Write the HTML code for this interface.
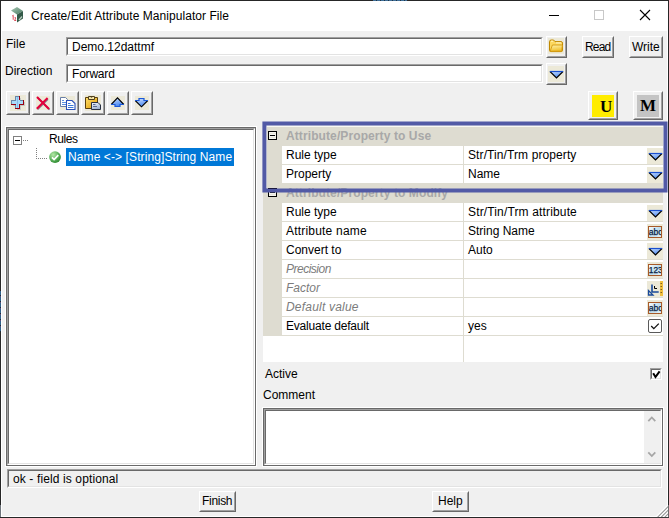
<!DOCTYPE html>
<html><head><meta charset="utf-8">
<style>
*{margin:0;padding:0;box-sizing:border-box}
html,body{width:669px;height:518px;overflow:hidden;background:#f0f0f0}
body{position:relative;font-family:"Liberation Sans",sans-serif;font-size:12px;color:#000}
.a{position:absolute}
.t{position:absolute;white-space:nowrap;line-height:14px;font-size:12px}
.btn{position:absolute;background:#f0f0f0;border:1px solid;border-color:#fff #696969 #696969 #fff}
.btn::before{content:"";position:absolute;left:0;top:0;right:0;bottom:0;border:1px solid;border-color:#f0f0f0 #a0a0a0 #a0a0a0 #f0f0f0}
.sunk{position:absolute;background:#fff;border:1px solid;border-color:#a0a0a0 #fff #fff #a0a0a0}
.sunk::before{content:"";position:absolute;left:0;top:0;right:0;bottom:0;border:1px solid;border-color:#696969 #e3e3e3 #e3e3e3 #696969}
.frame{position:absolute;background:#fff;border:1px solid #696969;box-shadow:0 0 0 1px #fff}
.frame::before{content:"";position:absolute;left:0;top:0;right:0;bottom:0;border:1px solid;border-color:#a0a0a0 #fff #fff #a0a0a0}
.frame::after{content:"";position:absolute;left:1px;top:1px;right:1px;bottom:1px;border:1px solid;border-color:#696969 #e3e3e3 #e3e3e3 #696969}
.ib{position:absolute;background:#ece9d8}
.gl{position:absolute;background:#dedcd1}
</style></head><body>
<!-- window border -->
<div class="a" style="left:0;top:0;width:669px;height:518px;border:1px solid #262626;background:#fff"></div>
<div class="a" style="left:2px;top:31px;width:665px;height:485px;background:#f0f0f0"></div>

<div class="a" style="left:373px;top:0;width:34px;height:1px;background:repeating-linear-gradient(90deg,#3f6f98 0 3px,#1e3448 3px 4px)"></div>
<div class="a" style="left:0;top:291px;width:1px;height:41px;background:repeating-linear-gradient(180deg,#2f6088 0 4px,#1a2a3a 4px 5px,#5a4a7a 5px 6px)"></div>
<div class="a" style="left:0;top:505px;width:1px;height:12px;background:#6e757c"></div>
<!-- title bar -->
<svg class="a" style="left:10px;top:6px" width="16" height="18" viewBox="0 0 16 18">
  <defs><linearGradient id="gt" x1="0" y1="0" x2="1" y2="1"><stop offset="0" stop-color="#a8c8b4"/><stop offset="1" stop-color="#4a7a62"/></linearGradient></defs>
  <path d="M1 4.5 L7 1 L13 5 L7 8.5 Z" fill="url(#gt)"/>
  <path d="M7 8.5 L13 5 L13 12.5 L7 16.5 Z" fill="#335a48"/>
  <path d="M9 14 L12 10.5" stroke="#b8ccc0" stroke-width="1.3"/>
  <path d="M2.3 10 L3.2 9.2 V13.8 M4.5 11.8 Q6 10.8 5.5 12.8 L4.5 14.5 H6.2" stroke="#d83848" stroke-width="0.9" fill="none"/>
</svg>
<div class="t" style="left:31px;top:9px;letter-spacing:0.05px">Create/Edit Attribute Manipulator File</div>
<div class="a" style="left:549px;top:15px;width:10px;height:1px;background:#000"></div>
<div class="a" style="left:594px;top:10px;width:10px;height:10px;border:1px solid #c8c8c8"></div>
<svg class="a" style="left:639px;top:9px" width="12" height="12" viewBox="0 0 12 12"><path d="M1 1 L11 11 M11 1 L1 11" stroke="#000" stroke-width="1.1"/></svg>

<!-- File / Direction -->
<div class="t" style="left:6px;top:37px">File</div>
<div class="t" style="left:5px;top:64px">Direction</div>
<div class="sunk" style="left:66px;top:37px;width:477px;height:19px"></div>
<div class="t" style="left:72px;top:40px">Demo.12dattmf</div>
<div class="sunk" style="left:66px;top:64px;width:477px;height:19px"></div>
<div class="t" style="left:72px;top:67px;letter-spacing:-0.2px">Forward</div>

<div class="btn" style="left:546px;top:36px;width:21px;height:22px"></div>
<div class="ib" style="left:548px;top:38px;width:16px;height:16px"></div>
<svg class="a" style="left:548px;top:38px" width="16" height="16" viewBox="0 0 16 16">
  <defs><linearGradient id="gf" x1="0" y1="0" x2="0.3" y2="1"><stop offset="0" stop-color="#fff4b0"/><stop offset="1" stop-color="#f0c030"/></linearGradient>
  <linearGradient id="ga" x1="0" y1="0" x2="0.4" y2="1"><stop offset="0" stop-color="#d8e8ff"/><stop offset="1" stop-color="#4a88f0"/></linearGradient></defs>
  <path d="M1.5 3.8 Q1.5 2 3.2 2 H5.6 L7 3.6 H13 Q14.5 3.6 14.5 5.1 V12.3 Q14.5 13.6 13.3 13.6 H2.7 Q1.5 13.6 1.5 12.3 Z" fill="#fcd860" stroke="#c08800" stroke-width="1"/>
  <path d="M3 3.2 H5.2 M8 4.9 H13.2" stroke="#fff6c8" stroke-width="1"/>
  <path d="M4.4 7 H14.4 L13.7 13.2 H2.2 Z" fill="url(#gf)" stroke="#d49a10" stroke-width="0.9"/>
</svg>
<div class="btn" style="left:546px;top:63px;width:21px;height:22px"></div>
<div class="ib" style="left:548px;top:66px;width:16px;height:16px"></div>
<svg class="a" style="left:548px;top:65px" width="16" height="16" viewBox="0 0 16 16">
  <path d="M1.8 6 H15.2 L8.5 13 Z" fill="url(#ga)"/>
  <path d="M2 6.5 L8.5 13 L15 6.5" stroke="#000" stroke-width="1.15" fill="none"/>
  <path d="M1.8 6.5 H15.2" stroke="#1a50d0" stroke-width="1.2"/>
</svg>
<div class="btn" style="left:582px;top:36px;width:32px;height:22px"></div>
<div class="t" style="left:585px;top:40px;letter-spacing:-0.8px">Read</div>
<div class="btn" style="left:629px;top:36px;width:34px;height:22px"></div>
<div class="t" style="left:632px;top:40px">Write</div>

<!-- toolbar -->
<div class="btn" style="left:6px;top:91px;width:24px;height:24px"></div>
<div class="ib" style="left:10px;top:95px;width:16px;height:16px"></div>
<svg class="a" style="left:10px;top:95px" width="16" height="16" viewBox="0 0 16 16" shape-rendering="crispEdges">
  <path d="M6 2 H10 V6 H14 V10 H10 V14 H6 V10 H2 V6 H6 Z" fill="#b8e6ff" transform="translate(0.6,0.6)" opacity="0.35" style="fill:#8090a8"/>
  <path d="M5 1 H10 V5 H14 V10 H10 V14 H5 V10 H1 V5 H5 Z" fill="#a8dcfa"/>
  <path d="M7 2 H8 V13 H7 Z" fill="#88b8e8"/>
  <path d="M5 1 H10 V2 H6 V6 H2 V9 H1 V5 H5 Z M10 5 H14 V6 H10 Z" fill="#6a88a8"/>
  <path d="M9 1 H10 V5 H9 Z M13 5 H14 V10 H13 Z M10 9 H14 V10 H10 Z M9 9 H10 V14 H9 Z M5 13 H10 V14 H5 Z M1 9 H6 V10 H1 Z M5 10 H6 V14 H5 Z" fill="#9a0010"/>
  <path d="M5 10 H6 V13 H5 Z" fill="#6a88a8"/>
</svg>
<div class="btn" style="left:32px;top:91px;width:22px;height:24px"></div>
<div class="ib" style="left:36px;top:96px;width:14px;height:14px"></div>
<svg class="a" style="left:35px;top:95px" width="16" height="16" viewBox="0 0 16 16">
  <path d="M2.8 2.8 L14.6 14.6 M13 4.2 L2.6 14.4" stroke="#5a6070" stroke-width="1.6" opacity="0.7"/>
  <path d="M2 2 L14 14 M12.6 3 L1.8 13.8" stroke="#e4003a" stroke-width="2"/>
</svg>
<div class="btn" style="left:56px;top:91px;width:23px;height:24px"></div>
<div class="ib" style="left:60px;top:96px;width:15px;height:14px"></div>
<svg class="a" style="left:60px;top:95px" width="16" height="16" viewBox="0 0 16 16">
  <path d="M0.5 2.5 H5.5 L7.5 4.5 V11.5 H0.5 Z" fill="#fff" stroke="#6a80a8" stroke-width="1"/>
  <path d="M2 5.5 H4 M2 7.5 H6 M2 9.5 H6" stroke="#5a90e0" stroke-width="1"/>
  <path d="M6.5 5.5 H12 L15 8.5 V14.5 H6.5 Z" fill="#fff" stroke="#2a50b8" stroke-width="1.1"/>
  <path d="M8 8.5 H10.5 M8 10.5 H13.5 M8 12.5 H13.5" stroke="#3a78d8" stroke-width="1"/>
</svg>
<div class="btn" style="left:81px;top:91px;width:24px;height:24px"></div>
<div class="ib" style="left:85px;top:95px;width:16px;height:16px"></div>
<svg class="a" style="left:85px;top:95px" width="16" height="16" viewBox="0 0 16 16">
  <defs><linearGradient id="gp" x1="0" y1="0" x2="1" y2="1"><stop offset="0" stop-color="#ffe070"/><stop offset="1" stop-color="#e09a00"/></linearGradient>
  <linearGradient id="gd" x1="0" y1="0" x2="0.5" y2="1"><stop offset="0" stop-color="#f4f8ff"/><stop offset="1" stop-color="#a0b4d0"/></linearGradient></defs>
  <path d="M0.5 2.5 H12.5 V13.5 H0.5 Z" fill="url(#gp)" stroke="#5a4010" stroke-width="1"/>
  <path d="M3.5 1.5 H9.5 V4.5 H3.5 Z" fill="#f8e8a8" stroke="#504020" stroke-width="1"/>
  <circle cx="6.5" cy="2" r="0.8" fill="#504020"/>
  <path d="M6.5 7.5 H13 L15.5 10 V14.5 H6.5 Z" fill="url(#gd)" stroke="#283040" stroke-width="1"/>
  <path d="M8 9.5 H10.5 M8 11.5 H12" stroke="#5a6a90" stroke-width="1"/>
</svg>
<div class="btn" style="left:107px;top:91px;width:22px;height:24px"></div>
<div class="ib" style="left:111px;top:96px;width:14px;height:14px"></div>
<svg class="a" style="left:110px;top:95px" width="16" height="16" viewBox="0 0 16 16">
  <path d="M7.5 2.5 L14 9.5 H10 V11.5 H5 V9.5 H1 Z" fill="url(#ga)"/>
  <path d="M1.2 9.5 L7.5 2.8 L13.8 9.5" stroke="#000" stroke-width="1.1" fill="none"/>
  <path d="M1 9.5 H5 V11.5 H10 V9.5 H14" stroke="#1a58d8" stroke-width="1.2" fill="none"/>
</svg>
<div class="btn" style="left:131px;top:91px;width:22px;height:24px"></div>
<div class="ib" style="left:135px;top:96px;width:14px;height:14px"></div>
<svg class="a" style="left:134px;top:95px" width="16" height="16" viewBox="0 0 16 16">
  <path d="M5 3.5 H10 V5.5 H14 L7.5 12 L1 5.5 H5 Z" fill="url(#ga)"/>
  <path d="M1.2 5.5 L7.5 11.8 L13.8 5.5" stroke="#000" stroke-width="1.1" fill="none"/>
  <path d="M1 5.5 H5 V3.5 H10 V5.5 H14" stroke="#1a58d8" stroke-width="1.2" fill="none"/>
</svg>

<!-- U / M -->
<div class="btn" style="left:588px;top:91px;width:30px;height:29px"></div>
<div class="a" style="left:592px;top:95px;width:22px;height:22px;background:#ffec00"></div>
<div class="t" style="left:600px;top:98px;font-family:'Liberation Serif';font-weight:bold;font-size:17px;line-height:18px">U</div>
<div class="btn" style="left:633px;top:91px;width:30px;height:29px"></div>
<div class="a" style="left:637px;top:95px;width:22px;height:22px;background:#c4c4c4"></div>
<div class="t" style="left:640px;top:97px;font-family:'Liberation Serif';font-weight:bold;font-size:17px;line-height:18px">M</div>

<!-- tree panel -->
<div class="frame" style="left:6px;top:127px;width:250px;height:339px"></div>
<div class="a" style="left:13px;top:136px;width:9px;height:9px;border:1px solid #808080;background:#fff"></div>
<div class="a" style="left:15px;top:140px;width:5px;height:1px;background:#000"></div>
<div class="a" style="left:23px;top:140px;width:5px;height:1px;background:repeating-linear-gradient(90deg,#808080 0 1px,transparent 1px 2px)"></div>
<div class="t" style="left:49px;top:132px;letter-spacing:-0.4px">Rules</div>
<div class="a" style="left:36px;top:148px;width:1px;height:11px;background:repeating-linear-gradient(180deg,#808080 0 1px,transparent 1px 2px)"></div>
<div class="a" style="left:36px;top:158px;width:11px;height:1px;background:repeating-linear-gradient(90deg,#808080 0 1px,transparent 1px 2px)"></div>
<svg class="a" style="left:48px;top:150px" width="14" height="14" viewBox="0 0 14 14">
  <defs><radialGradient id="gg" cx="0.35" cy="0.3" r="0.75"><stop offset="0" stop-color="#b4e8a8"/><stop offset="0.6" stop-color="#5ab05a"/><stop offset="1" stop-color="#2e8a30"/></radialGradient></defs>
  <circle cx="7" cy="7.1" r="5.9" fill="url(#gg)"/>
  <path d="M4 7.4 L6.1 9.5 L10.3 5.2" stroke="#fff" stroke-width="1.7" fill="none"/>
</svg>
<div class="a" style="left:66px;top:148px;width:168px;height:18px;background:#0078d7"></div>
<div class="t" style="left:68px;top:150px;color:#fff;letter-spacing:0.1px">Name &lt;-&gt; [String]String Name</div>

<!-- property grid -->
<div class="a" style="left:263px;top:127px;width:400px;height:235px;background:#fff"></div>
<div class="gl" style="left:263px;top:127px;width:400px;height:19px"></div>
<div class="gl" style="left:263px;top:127px;width:19px;height:208px"></div>
<div class="gl" style="left:263px;top:184px;width:400px;height:19px"></div>
<!-- row separators -->
<div class="gl" style="left:282px;top:164px;width:381px;height:1px"></div>
<div class="gl" style="left:282px;top:183px;width:381px;height:1px"></div>
<div class="gl" style="left:282px;top:221px;width:381px;height:1px"></div>
<div class="gl" style="left:282px;top:240px;width:381px;height:1px"></div>
<div class="gl" style="left:282px;top:259px;width:381px;height:1px"></div>
<div class="gl" style="left:282px;top:278px;width:381px;height:1px"></div>
<div class="gl" style="left:282px;top:297px;width:381px;height:1px"></div>
<div class="gl" style="left:282px;top:316px;width:381px;height:1px"></div>
<div class="gl" style="left:263px;top:335px;width:400px;height:1px"></div>
<!-- column divider -->
<div class="gl" style="left:463px;top:146px;width:1px;height:38px"></div>
<div class="gl" style="left:463px;top:203px;width:1px;height:159px"></div>
<!-- button cells -->
<div class="ib" style="left:647px;top:148px;width:16px;height:16px"></div>
<div class="ib" style="left:647px;top:167px;width:16px;height:16px"></div>
<div class="ib" style="left:647px;top:205px;width:16px;height:16px"></div>
<div class="ib" style="left:647px;top:224px;width:16px;height:16px"></div>
<div class="ib" style="left:647px;top:243px;width:16px;height:16px"></div>
<div class="ib" style="left:647px;top:262px;width:16px;height:16px"></div>
<div class="ib" style="left:647px;top:281px;width:16px;height:16px"></div>
<div class="ib" style="left:647px;top:300px;width:16px;height:16px"></div>

<!-- category 1 -->
<div class="a" style="left:268px;top:131px;width:9px;height:9px;border:1px solid #000;background:repeating-linear-gradient(180deg,#f6f5ee 0 1px,#e8e7dc 1px 2px)"></div>
<div class="a" style="left:270px;top:135px;width:5px;height:1px;background:#000"></div>
<div class="t" style="left:286px;top:129px;font-weight:bold;color:#a8a8a8;letter-spacing:0.1px">Attribute/Property to Use</div>
<div class="t" style="left:286px;top:148px">Rule type</div>
<div class="t" style="left:468px;top:148px;letter-spacing:0.1px">Str/Tin/Trm property</div>
<div class="t" style="left:286px;top:167px">Property</div>
<div class="t" style="left:468px;top:167px">Name</div>
<!-- category 2 -->
<div class="a" style="left:268px;top:188px;width:9px;height:9px;border:1px solid #000;background:repeating-linear-gradient(180deg,#f6f5ee 0 1px,#e8e7dc 1px 2px)"></div>
<div class="a" style="left:270px;top:192px;width:5px;height:1px;background:#000"></div>
<div class="t" style="left:286px;top:186px;font-weight:bold;color:#a8a8a8;letter-spacing:0.1px">Attribute/Property to Modify</div>
<div class="t" style="left:286px;top:205px">Rule type</div>
<div class="t" style="left:468px;top:205px;letter-spacing:0.15px">Str/Tin/Trm attribute</div>
<div class="t" style="left:286px;top:224px;letter-spacing:0.2px">Attribute name</div>
<div class="t" style="left:468px;top:224px">String Name</div>
<div class="t" style="left:286px;top:243px">Convert to</div>
<div class="t" style="left:468px;top:243px">Auto</div>
<div class="t" style="left:286px;top:262px;font-style:italic;color:#7c7c7c;letter-spacing:-0.5px">Precision</div>
<div class="t" style="left:286px;top:281px;font-style:italic;color:#7c7c7c">Factor</div>
<div class="t" style="left:286px;top:300px;font-style:italic;color:#7c7c7c;letter-spacing:0.2px">Default value</div>
<div class="t" style="left:286px;top:319px;letter-spacing:-0.2px">Evaluate default</div>
<div class="t" style="left:468px;top:319px">yes</div>

<!-- dropdown arrows -->
<svg class="a" style="left:647px;top:148px" width="16" height="16" viewBox="0 0 16 16"><path d="M1.8 5 H15.2 L8.5 12 Z" fill="url(#ga)"/><path d="M2 5.5 L8.5 12 L15 5.5" stroke="#000" stroke-width="1.15" fill="none"/><path d="M1.8 5.5 H15.2" stroke="#1a50d0" stroke-width="1.2"/></svg>
<svg class="a" style="left:647px;top:167px" width="16" height="16" viewBox="0 0 16 16"><path d="M1.8 5 H15.2 L8.5 12 Z" fill="url(#ga)"/><path d="M2 5.5 L8.5 12 L15 5.5" stroke="#000" stroke-width="1.15" fill="none"/><path d="M1.8 5.5 H15.2" stroke="#1a50d0" stroke-width="1.2"/></svg>
<svg class="a" style="left:647px;top:205px" width="16" height="16" viewBox="0 0 16 16"><path d="M1.8 5 H15.2 L8.5 12 Z" fill="url(#ga)"/><path d="M2 5.5 L8.5 12 L15 5.5" stroke="#000" stroke-width="1.15" fill="none"/><path d="M1.8 5.5 H15.2" stroke="#1a50d0" stroke-width="1.2"/></svg>
<svg class="a" style="left:647px;top:243px" width="16" height="16" viewBox="0 0 16 16"><path d="M1.8 5 H15.2 L8.5 12 Z" fill="url(#ga)"/><path d="M2 5.5 L8.5 12 L15 5.5" stroke="#000" stroke-width="1.15" fill="none"/><path d="M1.8 5.5 H15.2" stroke="#1a50d0" stroke-width="1.2"/></svg>
<svg class="a" style="left:0;top:0" width="1" height="1"><defs><clipPath id="ci"><rect x="2" y="2" width="12" height="10"/></clipPath><linearGradient id="gb" x1="0" y1="0" x2="1" y2="1"><stop offset="0" stop-color="#ffffff"/><stop offset="0.5" stop-color="#bcdcec"/><stop offset="1" stop-color="#e8f4fa"/></linearGradient></defs></svg>
<svg class="a" style="left:647px;top:225px" width="16" height="14" viewBox="0 0 16 14">
  <rect x="1.5" y="1.5" width="13" height="11" fill="url(#gb)" stroke="#a85a28" stroke-width="1"/>
  <text x="1.8" y="10" font-family="Liberation Sans" font-size="9.5" fill="#0a2040" stroke="#0a2040" stroke-width="0.25" textLength="13.8" lengthAdjust="spacingAndGlyphs" clip-path="url(#ci)">abc</text>
  <rect x="14" y="1" width="1" height="12" fill="#a85a28"/>
</svg>
<svg class="a" style="left:647px;top:263px" width="16" height="14" viewBox="0 0 16 14">
  <rect x="1.5" y="1.5" width="13" height="11" fill="url(#gb)" stroke="#a85a28" stroke-width="1"/>
  <text x="1.8" y="10" font-family="Liberation Sans" font-size="9.5" fill="#0a2040" stroke="#0a2040" stroke-width="0.25" textLength="13.8" lengthAdjust="spacingAndGlyphs" clip-path="url(#ci)">123</text>
  <rect x="14" y="1" width="1" height="12" fill="#a85a28"/>
</svg>
<svg class="a" style="left:647px;top:301px" width="16" height="14" viewBox="0 0 16 14">
  <rect x="1.5" y="1.5" width="13" height="11" fill="url(#gb)" stroke="#a85a28" stroke-width="1"/>
  <text x="1.8" y="10" font-family="Liberation Sans" font-size="9.5" fill="#0a2040" stroke="#0a2040" stroke-width="0.25" textLength="13.8" lengthAdjust="spacingAndGlyphs" clip-path="url(#ci)">abc</text>
  <rect x="14" y="1" width="1" height="12" fill="#a85a28"/>
</svg>
<svg class="a" style="left:647px;top:279px" width="16" height="18" viewBox="0 0 16 18">
  <rect x="13" y="2" width="3" height="15" fill="#f0c040"/>
  <path d="M13.5 4.5 H15 M13.5 7.5 H15 M13.5 10.5 H15 M13.5 13.5 H15" stroke="#806020" stroke-width="1"/>
  <path d="M5 5.5 V13 H11.7" stroke="#1a4a9a" stroke-width="1.6" fill="none"/>
  <path d="M1.5 11.5 V16 H6 Z" stroke="#1a4a9a" stroke-width="1.3" fill="none"/>
  <path d="M7.5 7 V9.5 H10" stroke="#000" stroke-width="1" fill="none"/>
</svg>

<!-- evaluate default checkbox -->
<div class="a" style="left:648px;top:319px;width:14px;height:14px;border:1px solid #5a5a5a;border-radius:2px;background:#fff"></div>
<svg class="a" style="left:648px;top:319px" width="14" height="14" viewBox="0 0 14 14"><path d="M3.2 7 L5.8 9.6 L10.8 4.6" stroke="#111" stroke-width="1.3" fill="none"/></svg>

<!-- blue highlight box -->
<div class="a" style="left:266px;top:126px;width:397px;height:1px;background:#f8f8f2"></div>
<div class="a" style="left:266px;top:126px;width:1px;height:62px;background:#f4f4ec"></div>
<svg class="a" style="left:0;top:0" width="669" height="518" viewBox="0 0 669 518"><rect x="264.4" y="123.5" width="401.1" height="67" fill="none" stroke="#525aa6" stroke-width="4"/></svg>
<div class="a" style="left:268px;top:188px;width:9px;height:1px;background:#1a1a40"></div>

<!-- Active / Comment -->
<div class="t" style="left:265px;top:367px">Active</div>
<div class="sunk" style="left:650px;top:368px;width:12px;height:12px"></div>
<svg class="a" style="left:650px;top:368px" width="12" height="12" viewBox="0 0 12 12"><path d="M3.2 5.2 L5.5 9 L9.6 3.3" stroke="#000" stroke-width="2" fill="none"/></svg>
<div class="t" style="left:263px;top:388px">Comment</div>
<div class="frame" style="left:263px;top:408px;width:400px;height:58px"></div>
<div class="a" style="left:644px;top:411px;width:17px;height:52px;background:#f0f0f0"></div>
<svg class="a" style="left:644px;top:414px" width="17" height="10" viewBox="0 0 17 10"><path d="M4.3 7.2 L7.8 3.5 L11.3 7.2" stroke="#a6a6a6" stroke-width="1.8" fill="none"/></svg>
<svg class="a" style="left:644px;top:449px" width="17" height="10" viewBox="0 0 17 10"><path d="M4.3 3.3 L7.8 7 L11.3 3.3" stroke="#a6a6a6" stroke-width="1.8" fill="none"/></svg>

<!-- status bar -->
<div class="sunk" style="left:7px;top:469px;width:655px;height:19px;background:#f0f0f0"></div>
<div class="t" style="left:13px;top:472px;letter-spacing:0.12px">ok - field is optional</div>

<!-- buttons -->
<div class="btn" style="left:199px;top:491px;width:37px;height:21px"></div>
<div class="t" style="left:202px;top:494px;letter-spacing:-0.3px">Finish</div>
<div class="btn" style="left:432px;top:491px;width:37px;height:21px"></div>
<div class="t" style="left:438px;top:494px">Help</div>

<!-- size grip -->
<svg class="a" style="left:650px;top:500px" width="19" height="18" viewBox="0 0 19 18">
<defs><clipPath id="cg"><rect x="0" y="0" width="18" height="17"/></clipPath></defs>
<g clip-path="url(#cg)"><line x1="4.800000000000001" y1="20" x2="20" y2="4.800000000000001" stroke="#9a9a9a" stroke-width="1.5"/><line x1="8.399999999999999" y1="20" x2="20" y2="8.399999999999999" stroke="#9a9a9a" stroke-width="1.5"/><line x1="12" y1="20" x2="20" y2="12" stroke="#9a9a9a" stroke-width="1.5"/><line x1="15.600000000000001" y1="20" x2="20" y2="15.600000000000001" stroke="#9a9a9a" stroke-width="1.5"/><line x1="3" y1="20" x2="20" y2="3" stroke="#fff" stroke-width="1.2"/><line x1="6.600000000000001" y1="20" x2="20" y2="6.600000000000001" stroke="#fff" stroke-width="1.2"/><line x1="10.2" y1="20" x2="20" y2="10.2" stroke="#fff" stroke-width="1.2"/><line x1="13.799999999999997" y1="20" x2="20" y2="13.799999999999997" stroke="#fff" stroke-width="1.2"/></g>
<rect x="18" y="5" width="1" height="13" fill="#6a6a6a"/>
<rect x="0" y="17" width="19" height="1" fill="#3a3a3a"/>
</svg>
</body></html>
